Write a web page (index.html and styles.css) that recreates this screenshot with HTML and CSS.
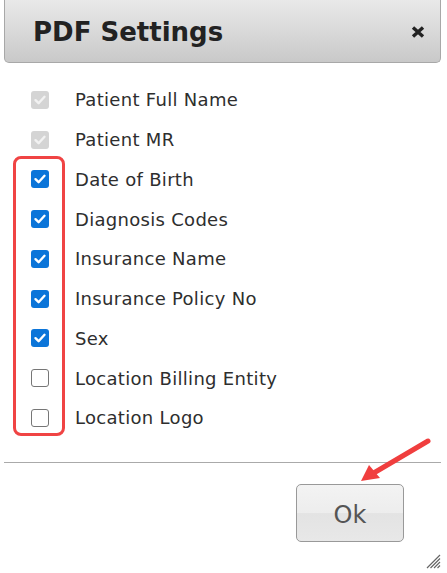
FILE: index.html
```html
<!DOCTYPE html>
<html lang="en">
<head>
    <meta charset="UTF-8">
    <meta name="viewport" content="width=device-width, initial-scale=1.0">
    <title>PDF Settings</title>
    <link rel="stylesheet" href="styles.css">
</head>
<body>
    <div class="dialog">
        <div class="dialog-header">
            <h1>PDF Settings</h1>
            <svg class="close-btn" viewBox="0 0 14 12"><path d="M2 1.5 L12 10.5 M12 1.5 L2 10.5"/></svg>
        </div>
        <div class="field-list">
            <label class="field"><span class="box disabled"><svg viewBox="0 0 18 18"><path d="M4.5 9.2 L7.6 12.2 L13.5 5.8"/></svg></span>Patient Full Name</label>
            <label class="field"><span class="box disabled"><svg viewBox="0 0 18 18"><path d="M4.5 9.2 L7.6 12.2 L13.5 5.8"/></svg></span>Patient MR</label>
            <label class="field"><span class="box checked"><svg viewBox="0 0 18 18"><path d="M4.5 9.2 L7.6 12.2 L13.5 5.8"/></svg></span>Date of Birth</label>
            <label class="field"><span class="box checked"><svg viewBox="0 0 18 18"><path d="M4.5 9.2 L7.6 12.2 L13.5 5.8"/></svg></span>Diagnosis Codes</label>
            <label class="field"><span class="box checked"><svg viewBox="0 0 18 18"><path d="M4.5 9.2 L7.6 12.2 L13.5 5.8"/></svg></span>Insurance Name</label>
            <label class="field"><span class="box checked"><svg viewBox="0 0 18 18"><path d="M4.5 9.2 L7.6 12.2 L13.5 5.8"/></svg></span>Insurance Policy No</label>
            <label class="field"><span class="box checked"><svg viewBox="0 0 18 18"><path d="M4.5 9.2 L7.6 12.2 L13.5 5.8"/></svg></span>Sex</label>
            <label class="field"><span class="box"></span>Location Billing Entity</label>
            <label class="field"><span class="box"></span>Location Logo</label>
            <!-- marcação em vermelho -->
            <div class="highlight"></div>
        </div>
        <div class="dialog-footer">
            <button class="ok-btn">Ok</button>
        </div>
        <svg class="grip" viewBox="0 0 16 16"><path d="M15 2 L2 15 M15 5.5 L5.5 15 M15 9 L9 15 M15 12.5 L12.5 15"/></svg>
    </div>
    <!-- seta de anotação -->
    <svg class="arrow" width="447" height="573" viewBox="0 0 447 573">
        <path class="arrow-line" d="M428 441 L372 474"/>
        <path class="arrow-head" d="M361 481 L369 465 L380 478 Z"/>
    </svg>
</body>
</html>
```

FILE: styles.css
```css
body {
    margin: 0;
    background: #fff;
    font-family: "DejaVu Sans", Verdana, sans-serif;
    color: #333;
    width: 447px;
    height: 573px;
    overflow: hidden;
    position: relative;
}
.dialog {
    width: 437px;
    margin-left: 4px;
    height: 573px;
    position: relative;
}
.dialog-header {
    height: 62px;
    border: 1px solid #a8a8a8;
    border-top: none;
    border-radius: 0 0 5px 5px;
    background: linear-gradient(#e9e9e9, #c9c9c9);
    display: flex;
    align-items: center;
    justify-content: space-between;
    padding: 0 15px 0 28px;
}
.dialog-header h1 {
    margin: 0;
    font-size: 26px;
    font-weight: bold;
    color: #222;
    padding-top: 2px;
}
.close-btn {
    width: 14px;
    height: 12px;
    margin-top: 2px;
}
.close-btn path {
    stroke: #222;
    stroke-width: 3.4;
    fill: none;
}
.field-list {
    position: relative;
    padding: 17px 0 0 27px;
}
.field {
    display: flex;
    align-items: center;
    height: 39.75px;
    font-size: 18px;
    letter-spacing: 0.3px;
    color: #2e2e2e;
}
.box {
    width: 18px;
    height: 18px;
    box-sizing: border-box;
    border: 1.5px solid #767676;
    border-radius: 3px;
    margin-right: 26px;
    flex-shrink: 0;
    display: flex;
    background: #fff;
}
.box svg {
    width: 100%;
    height: 100%;
}
.box path {
    fill: none;
    stroke: #fff;
    stroke-width: 2.4;
    stroke-linecap: round;
    stroke-linejoin: round;
}
.box.checked {
    background: #0b75d9;
    border: none;
}
.box.disabled {
    background: #d4d4d4;
    border: none;
}
.box.disabled path {
    stroke: #f2f2f2;
}
.highlight {
    position: absolute;
    left: 9px;
    top: 93px;
    width: 46px;
    height: 274px;
    border: 3px solid #f04444;
    border-radius: 8px;
}
.dialog-footer {
    margin-top: 24px;
    border-top: 1px solid #aaa;
    display: flex;
    justify-content: flex-end;
    padding: 21px 37px 0 0;
}
.ok-btn {
    width: 108px;
    height: 58px;
    border: 1px solid #999;
    border-radius: 5px;
    background: linear-gradient(#f3f3f3 0%, #ededed 50%, #e3e3e3 51%, #e8e8e8 100%);
    font-family: "DejaVu Sans", Verdana, sans-serif;
    font-size: 24px;
    color: #555;
    padding: 5px 0 0 0;
}
.grip {
    position: absolute;
    right: 0;
    bottom: 4px;
    width: 16px;
    height: 16px;
}
.grip path {
    stroke: #666;
    stroke-width: 1.2;
    fill: none;
}
.arrow {
    position: absolute;
    left: 0;
    top: 0;
    pointer-events: none;
}
.arrow-line {
    stroke: #f03e3e;
    stroke-width: 5;
    stroke-linecap: round;
    fill: none;
}
.arrow-head {
    fill: #f03e3e;
}
```
